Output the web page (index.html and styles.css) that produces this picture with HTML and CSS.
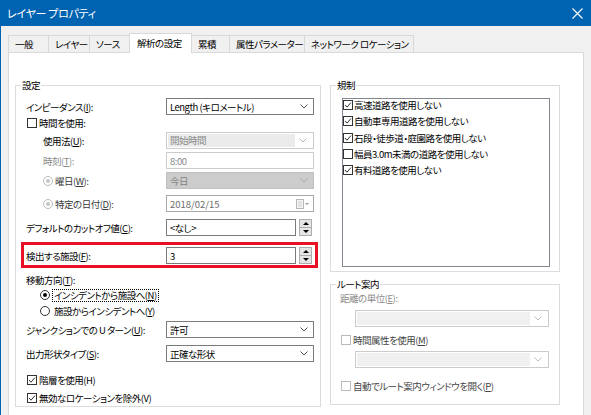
FILE: index.html
```html
<!DOCTYPE html>
<html lang="ja">
<head>
<meta charset="utf-8">
<title>レイヤー プロパティ</title>
<link rel="stylesheet" href="styles.css">
</head>
<body>
<div class="window">
  <div class="titlebar">
    <span class="title">レイヤー プロパティ</span>
    <svg class="close" width="11" height="11" viewBox="0 0 11 11"><path d="M0.5 0.5 L10.5 10.5 M10.5 0.5 L0.5 10.5" stroke="#fff" stroke-width="1.1" fill="none"/></svg>
  </div>
  <div class="client">
    <div class="tabs">
      <div class="tab t1">一般</div>
      <div class="tab t2">レイヤー</div>
      <div class="tab t3">ソース</div>
      <div class="tab t4 active">解析の設定</div>
      <div class="tab t5">累積</div>
      <div class="tab t6">属性パラメーター</div>
      <div class="tab t7">ネットワーク ロケーション</div>
    </div>
    <div class="page">
      <fieldset class="group left">
        <legend>設定</legend>
        <div class="inner">
          <div class="row">
            <span class="lbl">インピーダンス(<u>I</u>):</span>
            <div class="combo"><span class="val">Length (キロメートル)</span><svg class="chev" width="8" height="5" viewBox="0 0 8 5"><path d="M0.5 0.5 L4 4 L7.5 0.5" stroke="#555" fill="none"/></svg></div>
          </div>
          <div class="row short mt1">
            <span class="cb cbl"></span><span>時間を使用:</span>
          </div>
          <div class="row mt2">
            <span class="lbl ind">使用法(<u>U</u>):</span>
            <div class="combo dis"><span class="val">開始時間</span><svg class="chev" width="8" height="5" viewBox="0 0 8 5"><path d="M0.5 0.5 L4 4 L7.5 0.5" stroke="#b5b5b5" fill="none"/></svg></div>
          </div>
          <div class="row mt3">
            <span class="lbl ind grey">時刻(<u>T</u>):</span>
            <div class="tbox dis"><span class="val">8:00</span></div>
          </div>
          <div class="row mt3">
            <span class="lbl ind2"><span class="rb dis"></span><span class="mid">曜日(<u>W</u>):</span></span>
            <div class="combo dark"><span class="val">今日</span><svg class="chev" width="8" height="5" viewBox="0 0 8 5"><path d="M0.5 0.5 L4 4 L7.5 0.5" stroke="#a8a8a8" fill="none"/></svg></div>
          </div>
          <div class="row mt6">
            <span class="lbl ind2"><span class="rb dis"></span><span class="mid">特定の日付(<u>D</u>):</span></span>
            <div class="tbox date"><span class="val">2018/02/15</span>
              <svg class="cal" width="14" height="10" viewBox="0 0 14 10"><rect x="0.5" y="0.5" width="7" height="9" fill="#f4f4f4" stroke="#b8b8b8"/><path d="M2 3h4M2 5h4M2 7h4" stroke="#d0d0d0"/><path d="M9 4h4l-2 2z" fill="#9a9a9a"/></svg>
            </div>
          </div>
          <div class="row mt7">
            <span class="lbl">デフォルトのカットオフ値(<u>C</u>):</span>
            <div class="tbox edit"><span class="val">&lt;なし&gt;</span></div>
            <div class="spin"><span class="sb"><i class="up"></i></span><span class="sb"><i class="dn"></i></span></div>
          </div>
          <div class="redbox">
            <div class="row">
              <span class="lbl">検出する施設(<u>F</u>):</span>
              <div class="tbox edit"><span class="val">3</span></div>
              <div class="spin"><span class="sb"><i class="up"></i></span><span class="sb"><i class="dn"></i></span></div>
            </div>
          </div>
          <div class="row short mt5">
            <span>移動方向(<u>T</u>):</span>
          </div>
          <div class="row short mt1 radio-row">
            <span class="rb on"></span><span class="focus">インシデントから施設へ(<u>N</u>)</span>
          </div>
          <div class="row short mt2 radio-row">
            <span class="rb"></span><span class="nf">施設からインシデントへ(<u>Y</u>)</span>
          </div>
          <div class="row mt3">
            <span class="lbl">ジャンクションでの U ターン(<u>U</u>):</span>
            <div class="combo"><span class="val">許可</span><svg class="chev" width="8" height="5" viewBox="0 0 8 5"><path d="M0.5 0.5 L4 4 L7.5 0.5" stroke="#555" fill="none"/></svg></div>
          </div>
          <div class="row mt7">
            <span class="lbl">出力形状タイプ(<u>S</u>):</span>
            <div class="combo"><span class="val">正確な形状</span><svg class="chev" width="8" height="5" viewBox="0 0 8 5"><path d="M0.5 0.5 L4 4 L7.5 0.5" stroke="#555" fill="none"/></svg></div>
          </div>
          <div class="row short mt11">
            <span class="cb on cbl"><svg width="8" height="8" viewBox="0 0 8 8"><path d="M1 4 L3 6.2 L7 1.5" stroke="#333" fill="none" stroke-width="1"/></svg></span><span>階層を使用(H)</span>
          </div>
          <div class="row short mt4">
            <span class="cb on cbl"><svg width="8" height="8" viewBox="0 0 8 8"><path d="M1 4 L3 6.2 L7 1.5" stroke="#333" fill="none" stroke-width="1"/></svg></span><span>無効なロケーションを除外(V)</span>
          </div>
        </div>
      </fieldset>

      <div class="rightcol">
        <fieldset class="group restr">
          <legend>規制</legend>
          <div class="inner">
            <div class="listbox">
              <div class="item"><span class="cb on"><svg width="8" height="8" viewBox="0 0 8 8"><path d="M1 4 L3 6.2 L7 1.5" stroke="#333" fill="none"/></svg></span>高速道路を使用しない</div>
              <div class="item"><span class="cb on"><svg width="8" height="8" viewBox="0 0 8 8"><path d="M1 4 L3 6.2 L7 1.5" stroke="#333" fill="none"/></svg></span>自動車専用道路を使用しない</div>
              <div class="item"><span class="cb on"><svg width="8" height="8" viewBox="0 0 8 8"><path d="M1 4 L3 6.2 L7 1.5" stroke="#333" fill="none"/></svg></span>石段・徒歩道・庭園路を使用しない</div>
              <div class="item"><span class="cb"></span>幅員3.0m未満の道路を使用しない</div>
              <div class="item"><span class="cb on"><svg width="8" height="8" viewBox="0 0 8 8"><path d="M1 4 L3 6.2 L7 1.5" stroke="#333" fill="none"/></svg></span>有料道路を使用しない</div>
            </div>
          </div>
        </fieldset>
        <fieldset class="group route">
          <legend>ルート案内</legend>
          <div class="inner">
            <div class="row short mt1">
              <span class="grey">距離の単位(<u>E</u>):</span>
            </div>
            <div class="row tall mt4 indr">
              <div class="combo dis wide"><span class="val"></span><svg class="chev" width="8" height="5" viewBox="0 0 8 5"><path d="M0.5 0.5 L4 4 L7.5 0.5" stroke="#bdbdbd" fill="none"/></svg></div>
            </div>
            <div class="row short mt6">
              <span class="cb dis cbl"></span><span class="dtext">時間属性を使用(<u>M</u>)</span>
            </div>
            <div class="row mt4 indr">
              <div class="combo dis wide"><span class="val"></span><svg class="chev" width="8" height="5" viewBox="0 0 8 5"><path d="M0.5 0.5 L4 4 L7.5 0.5" stroke="#bdbdbd" fill="none"/></svg></div>
            </div>
            <div class="row short mt11">
              <span class="cb dis cbl"></span><span class="dtext">自動でルート案内ウィンドウを開く(<u>P</u>)</span>
            </div>
          </div>
        </fieldset>
      </div>
    </div>
  </div>
</div>
</body>
</html>
```
FILE: styles.css
```css
* { box-sizing: border-box; }
html, body { margin: 0; padding: 0; }
body {
  width: 591px;
  height: 415px;
  overflow: hidden;
  background: #f0f0f0;
  font-family: "Noto Sans CJK JP", "Noto Sans", sans-serif;
  font-feature-settings: "palt";
  font-size: 9.5px;
  letter-spacing: -0.5px;
  line-height: 12px;
  color: #000;
}
u { text-decoration: underline; text-underline-offset: 1px; }

.window {
  width: 591px;
  height: 415px;
  border-left: 1px solid #0063b1;
  display: flex;
  flex-direction: column;
}
.titlebar {
  height: 26px;
  flex: none;
  background: #0063b1;
  color: #fff;
  display: flex;
  align-items: center;
  justify-content: space-between;
  padding: 0 8px 0 6px;
  font-size: 11px;
  letter-spacing: -0.3px;
}

.client {
  flex: 1;
  padding: 7px 7px 0 7px;
  display: flex;
  flex-direction: column;
  min-height: 0;
}
.tabs {
  display: flex;
  height: 19px;
  align-items: flex-end;
  flex: none;
}
.tab {
  height: 17px;
  border: 1px solid #d9d9d9;
  border-bottom: none;
  background: #f0f0f0;
  padding: 2px 0 0 6px;
  white-space: nowrap;
  margin-left: -1px;
  flex: none;
}
.tab.t1 { margin-left: 0; width: 41px; }
.tab.t2 { width: 42px; }
.tab.t3 { width: 41px; }
.tab.t4 { width: 63px; }
.tab.t5 { width: 39px; }
.tab.t6 { width: 76px; }
.tab.t7 { padding-right: 5px; }
.tab.active {
  height: 20px;
  background: #fff;
  margin-bottom: -1px;
  position: relative;
  z-index: 1;
  padding: 3px 0 0 7px;
}

.page {
  flex: 1;
  background: #fff;
  border: 1px solid #d9d9d9;
  border-bottom: none;
  padding: 26px 0 0 6px;
  display: flex;
  align-items: flex-start;
  gap: 9px;
}

.group {
  margin: 0;
  padding: 0;
  border: 1px solid #dcdcdc;
  min-width: 0;
}
.group legend {
  padding: 0 1px;
  margin-left: 5px;
  line-height: 12px;
  color: #000;
}
.left { width: 306px; }
.left .inner { padding: 7px 5px 1px 10px; }

.row {
  display: flex;
  align-items: center;
  height: 17px;
  white-space: nowrap;
}
.row.short { height: 14px; }
.row.tall { height: 18px; }
.mt1 { margin-top: 1px; }
.mt2 { margin-top: 2px; }
.mt3 { margin-top: 3px; }
.mt4 { margin-top: 4px; }
.mt5 { margin-top: 5px; }
.mt6 { margin-top: 6px; }
.mt7 { margin-top: 7px; }
.mt11 { margin-top: 11px; }

.lbl { width: 140px; flex: none; display: flex; align-items: center; }
.lbl.ind { padding-left: 17px; }
.lbl.ind2 { padding-left: 17px; }
.grey { color: #8c8c8c; }
.mid { color: #3a3a3a; margin-left: 2px; }

.combo {
  width: 148px;
  height: 17px;
  border: 1px solid #7a7a7a;
  background: #fff;
  display: flex;
  align-items: center;
  padding-left: 3px;
}
.combo .val { flex: 1; }
.combo .chev { margin: 0 5px 0 4px; flex: none; }
.combo.dis {
  border-color: #cccccc;
  background: #fff;
  color: #8a8a8a;
  padding: 1px;
}
.combo.dis .val {
  height: 100%;
  background: #ebebeb;
  padding-left: 2px;
  line-height: 13px;
}
.combo.dark {
  background: #cccccc;
  border-color: #bfbfbf;
  color: #838383;
}
.combo.wide { width: 194px; }
.combo.wide.dis .val { background: #f0f0f0; }

.tbox {
  width: 148px;
  height: 17px;
  border: 1px solid #7a7a7a;
  background: #fff;
  display: flex;
  align-items: center;
  padding-left: 3px;
}
.tbox.dis { border-color: #cccccc; color: #8a8a8a; }
.tbox.date { border-color: #a8a8a8; color: #6d6d6d; letter-spacing: 0; }
.tbox.date .val { flex: 1; }
.tbox.date .cal { margin-right: 3px; }
.tbox.edit { width: 130px; }

.spin {
  width: 13px;
  height: 17px;
  margin-left: 3px;
  display: flex;
  flex-direction: column;
}
.sb {
  flex: 1;
  border: 1px solid #adadad;
  background: #e5e5e5;
  display: flex;
  align-items: center;
  justify-content: center;
}
.sb + .sb { border-top: none; }
.sb i { width: 0; height: 0; border-left: 3px solid transparent; border-right: 3px solid transparent; }
.sb i.up { border-bottom: 3px solid #000; }
.sb i.dn { border-top: 3px solid #000; }

.redbox {
  margin: 6px -3px 0 -5px;
  border: 3px solid #e81123;
  padding: 2px 0 1px 2px;
}

.cb {
  width: 10px;
  height: 10px;
  border: 1px solid #333;
  background: #fff;
  flex: none;
  display: inline-flex;
  align-items: center;
  justify-content: center;
}
.cb.dis { border-color: #bcbcbc; }
.cbl { margin-right: 2px; }
.row > .cb.cbl:first-child { margin-left: 1px; }

.rb {
  width: 10px;
  height: 10px;
  border: 1px solid #333;
  border-radius: 50%;
  flex: none;
  display: inline-flex;
  align-items: center;
  justify-content: center;
  background: #fff;
}
.rb.dis { border-color: #bcbcbc; }
.rb.dis::after { content: ""; width: 4px; height: 4px; border-radius: 50%; background: #c4c4c4; }
.rb.on::after { content: ""; width: 4px; height: 4px; border-radius: 50%; background: #000; }
.radio-row { padding-left: 14px; }
.radio-row .rb { margin-right: 2px; }
.focus { border: 1px dotted #000; padding: 0 1px; line-height: 11px; }
.nf { padding: 0 2px; }

.rightcol { width: 230px; display: flex; flex-direction: column; }
.restr .inner { padding: 7px 9px 4px 11px; }
.listbox {
  height: 169px;
  border: 1px solid #828790;
  background: #fff;
}
.item {
  height: 16.3px;
  display: flex;
  align-items: center;
  white-space: nowrap;
}
.item:first-child { margin-top: -2px; }
.item .cb { margin-right: 1px; }

.route { margin-top: 6px; }
.route .inner { padding: 0 10px 11px 9px; }
.indr { padding-left: 15px; }
.dtext { color: #444; }
.route .cb.cbl { margin-left: 1px; margin-right: 2px; }
```
